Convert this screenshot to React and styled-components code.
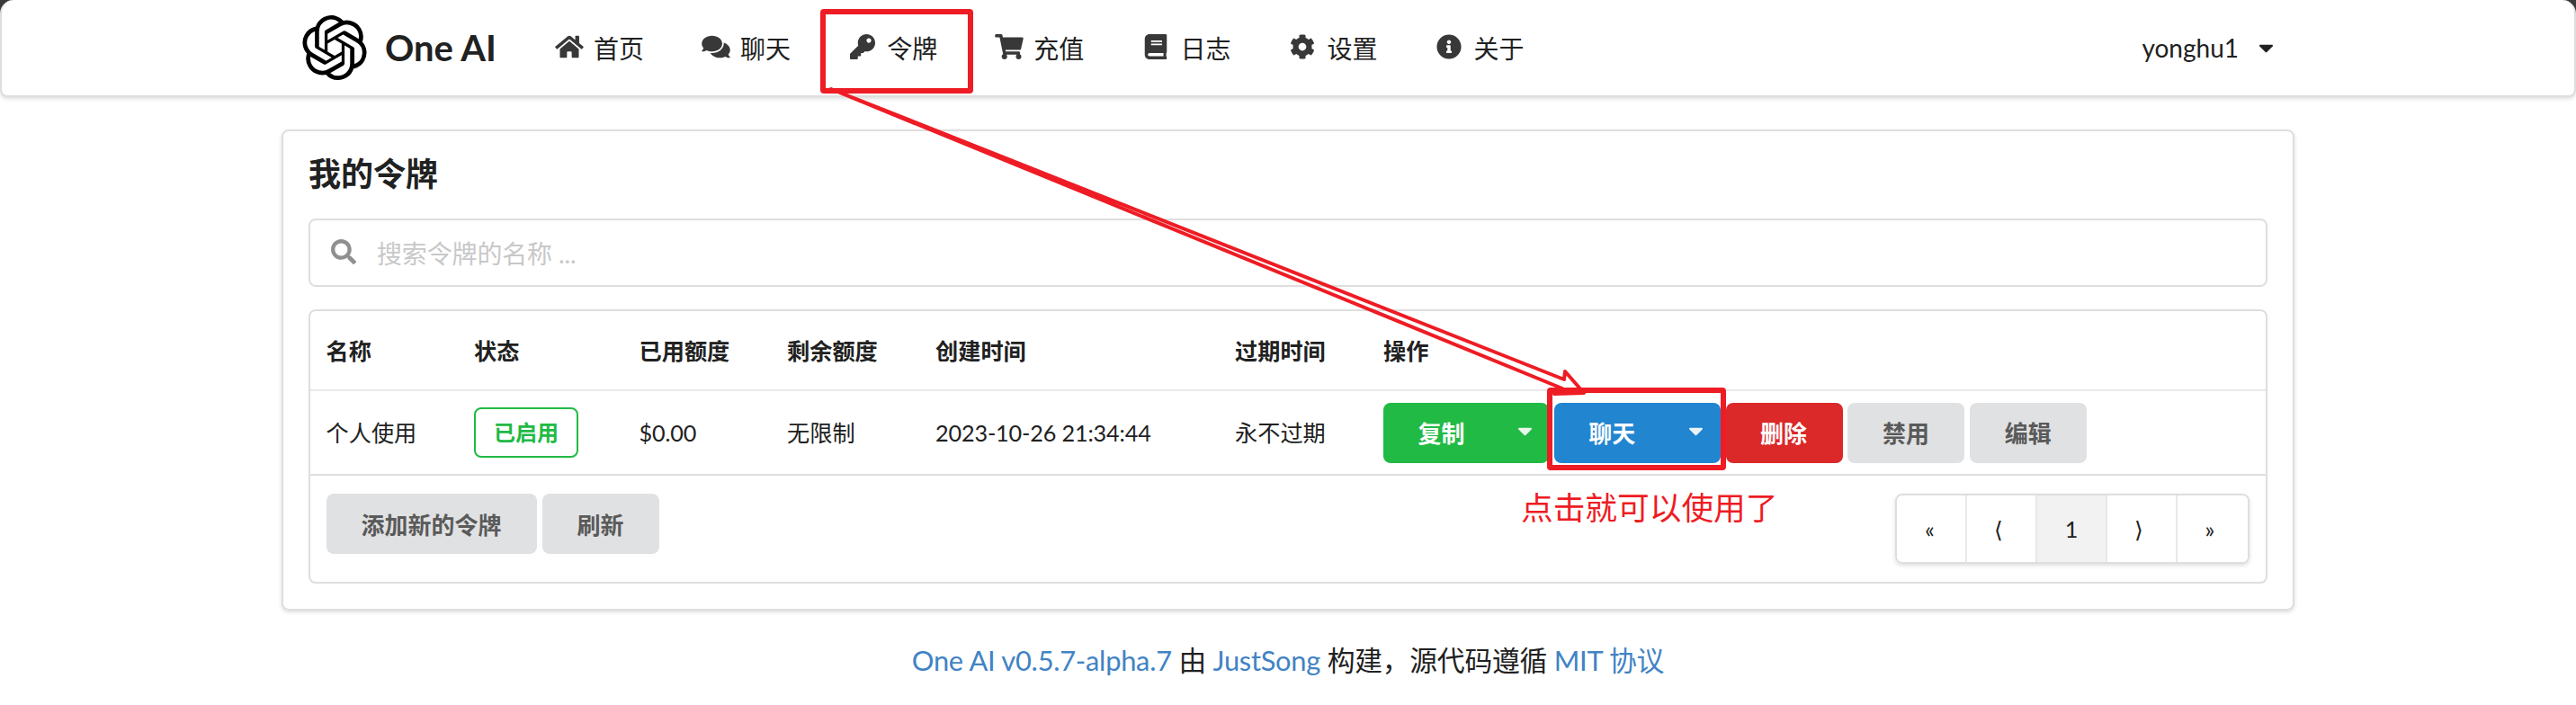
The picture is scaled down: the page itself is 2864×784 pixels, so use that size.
import React from "react";
import styled, { createGlobalStyle } from "styled-components";
import {
  FaHome, FaComments, FaKey, FaShoppingCart, FaBook, FaCog, FaInfoCircle, FaSearch, FaCaretDown,
} from "react-icons/fa";
import { SiOpenai } from "react-icons/si";

const LINE = "#dededf";
const INK = "#212121";
const MARK = "#ee1c24";

const Global = createGlobalStyle`
  * { box-sizing: border-box; }
  body {
    margin: 0;
    background: #fff;
    color: ${INK};
    font-family: Lato, "Noto Sans CJK SC", sans-serif;
    font-size: 28px;
    line-height: 40px;
  }
`;

const Page = styled.div`
  position: relative;
  width: 2864px;
  height: 784px;
  overflow: hidden;
`;

const Backdrop = styled.div`
  height: 108px;
  background: linear-gradient(#3a3a3a 0 30px, #fff 30px);
`;

const NavBar = styled.header`
  display: flex;
  align-items: center;
  height: 108px;
  padding: 0 334px 0 334px;
  background: #fff;
  border: 2px solid ${LINE};
  border-top: 0;
  border-radius: 15px 15px 8px 8px;
  box-shadow: 0 2px 4px rgba(34, 36, 38, 0.15);
`;

const Logo = styled(SiOpenai)`
  width: 72px;
  height: 72px;
  color: #000;
`;

const Brand = styled.div`
  width: 177px;
  padding-left: 20px;
  font-size: 40px;
  font-weight: 700;
`;

const NavItem = styled.a`
  display: flex;
  align-items: center;
  width: 163.1px;
  padding: 1px 32px 0;
  white-space: nowrap;
`;

const IconSlot = styled.span`
  display: flex;
  flex: none;
  justify-content: center;
  width: 33px;
  margin: 0 11px 3px -1px;
  color: #383838;

  svg { width: 32px; height: 28px; }
`;

const User = styled.div`
  display: flex;
  align-items: center;
  gap: 22px;
  margin-left: auto;
`;

const Caret = styled(FaCaretDown)`
  width: 17px;
  height: 26px;
`;

const Card = styled.main`
  width: 2238px;
  height: 535px;
  margin: 36px auto 0;
  padding: 24px 28px 0;
  border: 2px solid ${LINE};
  border-radius: 8px;
  box-shadow: 0 2px 4px rgba(34, 36, 38, 0.15);
`;

const Title = styled.h1`
  height: 46px;
  margin: 0 0 27px;
  font-size: 36px;
  line-height: 46px;
  font-weight: 700;
`;

const Search = styled.div`
  display: flex;
  align-items: center;
  gap: 23px;
  height: 76px;
  padding: 1px 0 0 23px;
  border: 2px solid ${LINE};
  border-radius: 8px;
  color: #c8c8c8;
  letter-spacing: -0.15px;

  svg { color: #909090; margin-bottom: 4px; }
`;

const Table = styled.section`
  height: 305px;
  margin-top: 25px;
  border: 2px solid ${LINE};
  border-radius: 8px;
  font-size: 25.2px;
`;

const Row = styled.div`
  display: grid;
  grid-template-columns: 164.5px 183.5px 164.5px 165px 333px 165px 1fr;
  align-items: center;
  height: ${(p) => (p.$head ? 89 : 94)}px;
  padding-left: 17.5px;
  font-weight: ${(p) => (p.$head ? 700 : 400)};
  border-bottom: 2px solid ${(p) => (p.$head ? "#e8e8e9" : LINE)};
`;

const Figures = styled.span`
  letter-spacing: -0.14px;
`;

const Badge = styled.span`
  display: inline-flex;
  align-items: center;
  justify-content: center;
  width: 116px;
  height: 56px;
  border: 2px solid #21ba45;
  border-radius: 8px;
  color: #21ba45;
  font-size: 24px;
  font-weight: 700;
`;

const Actions = styled.div`
  display: flex;
  gap: ${(p) => p.$gap || 6}px;
`;

const tones = {
  green: ["#21ba45", "#fff"],
  blue: ["#2185d0", "#fff"],
  red: ["#db2828", "#fff"],
  grey: ["#e0e1e2", "#5a5a5a"],
};

const Button = styled.button`
  display: flex;
  align-items: center;
  justify-content: space-between;
  width: ${(p) => p.$w || 130}px;
  height: 67px;
  padding: 0 ${(p) => (p.$menu ? 18.5 : 38)}px 1px 38.5px;
  border: 0;
  border-radius: 8px;
  background: ${(p) => tones[p.$tone || "grey"][0]};
  color: ${(p) => tones[p.$tone || "grey"][1]};
  font: 700 26px Lato, "Noto Sans CJK SC", sans-serif;
  white-space: nowrap;

  svg { margin-bottom: 4px; opacity: 0.9; }
`;

const TableFoot = styled.div`
  display: flex;
  align-items: flex-start;
  justify-content: space-between;
  padding: 20px 18px;
`;

const Pager = styled.nav`
  display: flex;
  width: 394px;
  height: 78px;
  border: 2px solid ${LINE};
  border-radius: 8px;
  box-shadow: 0 2px 4px rgba(34, 36, 38, 0.15);
  overflow: hidden;
`;

const PageLink = styled.a`
  display: flex;
  flex: none;
  width: 78px;
  align-items: center;
  justify-content: center;
  padding-right: ${(p) => p.$nudge || 0}px;
  border-right: 2px solid #e8e8e9;
  background: ${(p) => (p.$active ? "#f2f2f2" : "#fff")};
  color: ${INK};

  &:last-child { border-right: 0; }
`;

const Footer = styled.footer`
  margin-top: 36px;
  text-align: center;
  font-size: 30.8px;
  line-height: 40px;
  letter-spacing: -0.25px;

  a { color: #4183c4; }
`;

const MarkBox = styled.div`
  position: absolute;
  left: ${(p) => p.$x}px;
  top: ${(p) => p.$y}px;
  width: ${(p) => p.$w}px;
  height: ${(p) => p.$h}px;
  border: 6px solid ${MARK};
  border-radius: 4px;
`;

const Arrow = styled.svg`
  position: absolute;
  left: 0;
  top: 0;
`;

const Note = styled.div`
  position: absolute;
  left: 1691px;
  top: 539px;
  color: ${MARK};
  font-size: 35.7px;
  line-height: 52px;
  white-space: nowrap;
`;

const nav = [
  [FaHome, "首页"],
  [FaComments, "聊天"],
  [FaKey, "令牌"],
  [FaShoppingCart, "充值"],
  [FaBook, "日志"],
  [FaCog, "设置"],
  [FaInfoCircle, "关于"],
];

const headings = ["名称", "状态", "已用额度", "剩余额度", "创建时间", "过期时间", "操作"];

export default function App() {
  return (
    <Page>
      <Global />
      <Backdrop>
        <NavBar>
          <Logo />
          <Brand>One AI</Brand>
          {nav.map(([Icon, label]) => (
            <NavItem key={label}>
              <IconSlot><Icon /></IconSlot>
              {label}
            </NavItem>
          ))}
          <User>yonghu1<Caret /></User>
        </NavBar>
      </Backdrop>

      <Card>
        <Title>我的令牌</Title>
        <Search>
          <FaSearch size={28} />
          <span>搜索令牌的名称 ...</span>
        </Search>
        <Table>
          <Row $head>
            {headings.map((h) => <span key={h}>{h}</span>)}
          </Row>
          <Row>
            <span>个人使用</span>
            <span><Badge>已启用</Badge></span>
            <Figures>$0.00</Figures>
            <span>无限制</span>
            <Figures>2023-10-26 21:34:44</Figures>
            <span>永不过期</span>
            <Actions $gap={5.8}>
              <Button $tone="green" $menu $w={184}>复制<Caret /></Button>
              <Button $tone="blue" $menu $w={185}>聊天<Caret /></Button>
              <Button $tone="red">删除</Button>
              <Button>禁用</Button>
              <Button>编辑</Button>
            </Actions>
          </Row>
          <TableFoot>
            <Actions>
              <Button $w={234}>添加新的令牌</Button>
              <Button>刷新</Button>
            </Actions>
            <Pager>
              <PageLink $nudge={3}>«</PageLink>
              <PageLink $nudge={7}>⟨</PageLink>
              <PageLink $active>1</PageLink>
              <PageLink $nudge={6}>⟩</PageLink>
              <PageLink $nudge={6}>»</PageLink>
            </Pager>
          </TableFoot>
        </Table>
      </Card>

      <Footer>
        <a>One AI v0.5.7-alpha.7</a> 由 <a>JustSong</a> 构建，源代码遵循 <a>MIT 协议</a>
      </Footer>

      <MarkBox $x={912} $y={10} $w={170} $h={94} />
      <MarkBox $x={1720} $y={431} $w={199} $h={92} />
      <Arrow width="2864" height="784" fill="none" stroke={MARK} strokeWidth="4" strokeLinejoin="round">
        <path d="M924 99 L1739 422 L1740 413 L1761 437 L1728 438 L1737 432 Z" />
      </Arrow>
      <Note>点击就可以使用了</Note>
    </Page>
  );
}
